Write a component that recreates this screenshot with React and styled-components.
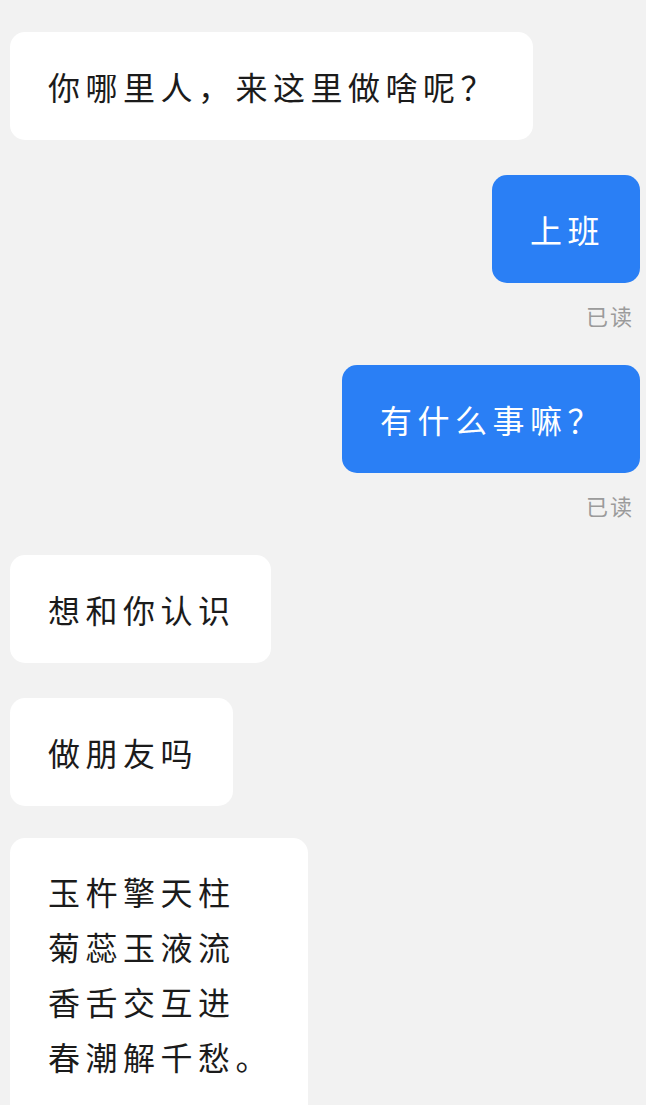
import styled, { createGlobalStyle } from "styled-components";

const messages = [
  { id: 1, mine: false, lines: ["你哪里人，来这里做啥呢？"] },
  { id: 2, mine: true, read: true, lines: ["上班"] },
  { id: 3, mine: true, read: true, lines: ["有什么事嘛？"] },
  { id: 4, mine: false, lines: ["想和你认识"] },
  { id: 5, mine: false, lines: ["做朋友吗"] },
  {
    id: 6,
    mine: false,
    poem: true,
    lines: ["玉杵擎天柱", "菊蕊玉液流", "香舌交互进", "春潮解千愁。"],
  },
];

const GlobalStyle = createGlobalStyle`
  html, body {
    margin: 0;
    padding: 0;
    background: #f2f2f2;
  }
  body {
    font-family: "Noto Sans CJK SC", "Noto Sans", sans-serif;
    overflow: hidden;
  }
`;

const ChatList = styled.div`
  display: flex;
  flex-direction: column;
  padding: 32px 6px 0 10px;
  height: 1073px;
  overflow: hidden;
`;

const MessageRow = styled.div`
  display: flex;
  flex-direction: column;
  align-items: ${(p) => (p.$mine ? "flex-end" : "flex-start")};
  margin-bottom: ${(p) => (p.$tight ? "32px" : "35px")};
`;

const Bubble = styled.div`
  box-sizing: border-box;
  max-width: 560px;
  padding: ${(p) => (p.$poem ? "26px 35px 34px 38px" : "34px 35px 34px 38px")};
  border-radius: 15px;
  background: ${(p) => (p.$mine ? "#2a7ff5" : "#ffffff")};
  color: ${(p) => (p.$mine ? "#ffffff" : "#1b1b1b")};
  font-size: 32px;
  letter-spacing: 5.5px;
  line-height: ${(p) => (p.$poem ? "55px" : "40px")};
  white-space: nowrap;
`;

const Line = styled.div``;

const ReadMark = styled.div`
  margin-top: 17px;
  margin-right: 6px;
  font-size: 22px;
  line-height: 30px;
  letter-spacing: 2px;
  color: #9b9b9b;
`;

export default function App() {
  return (
    <>
      <GlobalStyle />
      <ChatList>
        {messages.map((m, idx) => (
          <MessageRow
            key={m.id}
            $mine={m.mine}
            $tight={messages[idx + 1] && messages[idx + 1].poem}
          >
            <Bubble $mine={m.mine} $poem={m.poem}>
              {m.lines.map((l, i) => (
                <Line key={i}>{l}</Line>
              ))}
            </Bubble>
            {m.read && <ReadMark>已读</ReadMark>}
          </MessageRow>
        ))}
      </ChatList>
    </>
  );
}
